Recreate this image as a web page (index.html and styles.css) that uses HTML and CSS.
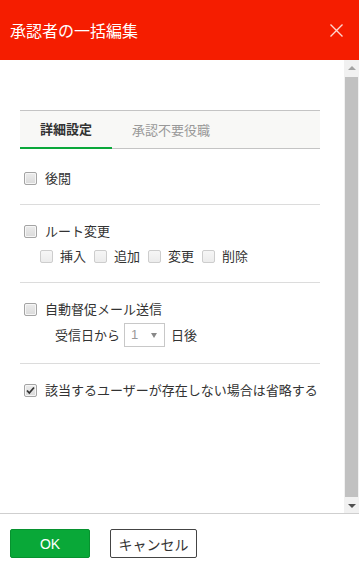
FILE: index.html
```html
<!DOCTYPE html>
<html lang="ja">
<head>
<meta charset="utf-8">
<title>承認者の一括編集</title>
<link rel="stylesheet" href="styles.css">
</head>
<body>
<div class="dialog">
  <header class="head">
    <h1 class="title">承認者の一括編集</h1>
    <svg class="close" width="13" height="13" viewBox="0 0 13 13"><path d="M0.5 0.5 L12.5 12.5 M12.5 0.5 L0.5 12.5" stroke="#ffd6cf" stroke-width="1.4" fill="none"/></svg>
  </header>
  <main class="body">
    <div class="content">
      <div class="inner">
        <div class="tabs">
          <div class="tab active">詳細設定</div>
          <div class="tab">承認不要役職</div>
        </div>
        <section class="sec first">
          <div class="row"><span class="cb"></span><span class="lbl">後閲</span></div>
        </section>
        <section class="sec">
          <div class="row"><span class="cb"></span><span class="lbl">ルート変更</span></div>
          <div class="row sub">
            <span class="cb dis"></span><span class="lbl s">挿入</span>
            <span class="cb dis"></span><span class="lbl s">追加</span>
            <span class="cb dis"></span><span class="lbl s">変更</span>
            <span class="cb dis"></span><span class="lbl s">削除</span>
          </div>
        </section>
        <section class="sec">
          <div class="row"><span class="cb"></span><span class="lbl">自動督促メール送信</span></div>
          <div class="row days">
            <span class="txt">受信日から</span>
            <div class="select"><span class="val">1</span><span class="arrow"></span></div>
            <span class="txt after">日後</span>
          </div>
        </section>
        <section class="sec last">
          <div class="row"><span class="cb on"><svg width="11" height="11" viewBox="0 0 11 11"><path d="M2 5.5 L4.3 8 L9 2.5" stroke="#333" stroke-width="1.8" fill="none"/></svg></span><span class="lbl">該当するユーザーが存在しない場合は省略する</span></div>
        </section>
      </div>
    </div>
    <div class="sbar">
      <div class="sbtn"><span class="tri up"></span></div>
      <div class="thumb"></div>
      <div class="strack"></div>
      <div class="sbtn"><span class="tri down"></span></div>
    </div>
  </main>
  <footer class="foot">
    <button class="btn ok">OK</button>
    <button class="btn cancel">キャンセル</button>
  </footer>
</div>
</body>
</html>
```
FILE: styles.css
```css
html, body {
  margin: 0;
  padding: 0;
  height: 573px;
  overflow: hidden;
  background: #fff;
}
body {
  font-family: "Noto Sans CJK JP", "Liberation Sans", sans-serif;
  font-size: 13px;
  color: #333;
}
.dialog {
  display: flex;
  flex-direction: column;
  height: 573px;
}
.head {
  flex: none;
  height: 60px;
  background: #f51d00;
  display: flex;
  align-items: center;
  padding: 0 16px 0 10px;
}
.title {
  flex: 1;
  margin: 0;
  font-size: 16px;
  font-weight: 400;
  color: #fff;
  line-height: 20px;
}
.close {
  display: block;
}
.body {
  flex: none;
  height: 453px;
  display: flex;
}
.content {
  flex: 1;
  overflow: hidden;
}
.sbar {
  flex: none;
  width: 15px;
  background: #f1f1f1;
  display: flex;
  flex-direction: column;
}
.sbtn {
  flex: none;
  height: 15px;
  display: flex;
  align-items: center;
  justify-content: center;
}
.tri {
  width: 0;
  height: 0;
  border-left: 4px solid transparent;
  border-right: 4px solid transparent;
}
.tri.up {
  border-bottom: 4px solid #a3a3a3;
}
.tri.down {
  border-top: 4px solid #505050;
}
.thumb {
  flex: none;
  height: 420px;
  margin: 2px 1px 0;
  background: #c1c1c1;
}
.strack {
  flex: 1;
}
.inner {
  width: 300px;
  margin-left: 20px;
  padding-top: 50px;
  padding-bottom: 116px;
}
.tabs {
  display: flex;
  background: #f8f8f6;
  border-top: 1px solid #c4c4c4;
  border-bottom: 1px solid #c4c4c4;
}
.tab {
  height: 37px;
  line-height: 37px;
  padding: 0 20px;
  color: #999;
}
.tab.active {
  height: 36px;
  line-height: 36px;
  width: 52px;
  text-align: center;
  font-weight: 700;
  color: #333;
  border-bottom: 2px solid #0aa83a;
  margin-bottom: -1px;
}
.sec {
  padding: 16px 0;
  border-bottom: 1px solid #dcdcdc;
}
.sec.first {
  margin-top: 3px;
}
.sec.last {
  border-bottom: none;
}
.row {
  display: flex;
  align-items: center;
  height: 20px;
  line-height: 20px;
  padding-left: 4px;
}
.row.sub {
  margin-top: 5px;
  padding-left: 20px;
}
.row.days {
  margin-top: 4px;
  height: 24px;
  padding-left: 35px;
}
.cb {
  flex: none;
  box-sizing: border-box;
  width: 13px;
  height: 13px;
  border: 1px solid #a4a4a4;
  border-radius: 2px;
  background: linear-gradient(#ececec, #dadada);
  box-shadow: inset 0 0 0 1px #f6f6f6;
  display: flex;
  align-items: center;
  justify-content: center;
}
.cb.dis {
  border-color: #cdcdcd;
  background: linear-gradient(#f6f6f6, #ececec);
  box-shadow: none;
}
.cb svg {
  display: block;
}
.lbl {
  margin-left: 8px;
  white-space: nowrap;
}
.lbl.s {
  margin-left: 7px;
  margin-right: 8px;
}
.txt {
  white-space: nowrap;
}
.select {
  box-sizing: border-box;
  width: 41px;
  height: 24px;
  margin-left: 4px;
  border: 1px solid #c8c8c8;
  display: flex;
  align-items: center;
  justify-content: space-between;
  padding: 0 7px 0 6px;
}
.val {
  font-family: "Liberation Sans", sans-serif;
  color: #999;
  font-size: 13px;
}
.arrow {
  width: 0;
  height: 0;
  border-left: 3.5px solid transparent;
  border-right: 3.5px solid transparent;
  border-top: 5px solid #888;
}
.after {
  margin-left: 6px;
}
.foot {
  flex: none;
  border-top: 1px solid #cfcfcf;
  padding: 15px 10px;
  display: flex;
  gap: 20px;
}
.btn {
  box-sizing: border-box;
  height: 29px;
  border-radius: 2px;
  font-size: 14px;
  padding: 0;
  margin: 0;
  cursor: pointer;
}
.ok {
  width: 80px;
  background: #09a838;
  border: 1px solid #07922f;
  color: #fff;
  font-family: "Liberation Sans", "Noto Sans CJK JP", sans-serif;
}
.cancel {
  width: 87px;
  background: #fff;
  border: 1px solid #444;
  color: #333;
  font-family: "Noto Sans CJK JP", sans-serif;
}
```
